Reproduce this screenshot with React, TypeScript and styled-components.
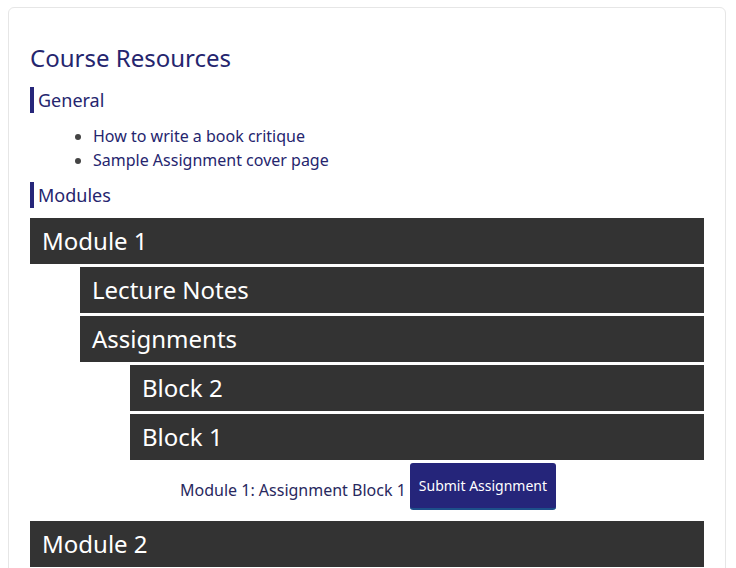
import React from "react";
import styled, { createGlobalStyle } from "styled-components";

const Global = createGlobalStyle`
  html, body { margin: 0; padding: 0; background: #ffffff; height: 568px; overflow: hidden; }
  body { padding: 7px 10px 0 8px; font-family: "Noto Sans", "Open Sans", sans-serif; }
  * { box-sizing: border-box; }
`;

const Card = styled.div`
  border: 1px solid #e6e6e6;
  border-radius: 6px;
  padding: 30px 21px 0 21px;
  background: #fff;
  height: 600px;
`;

const Title = styled.h2`
  margin: 0 0 9px 0;
  font-size: 24px;
  line-height: 40px;
  font-weight: 400;
  color: #25256e;
`;

const Section = styled.h3`
  margin: 0;
  padding-left: 4px;
  border-left: 4px solid #26267a;
  font-size: 18px;
  line-height: 26px;
  font-weight: 400;
  color: #25256e;
`;

const List = styled.ul`
  margin: 11px 0 10px 0;
  padding-left: 63px;
  list-style: disc;
`;

const Item = styled.li`
  font-size: 16px;
  line-height: 24px;
  color: #25256e;
  &::marker { color: #444; }
`;

const Tree = styled.div`
  margin-top: 10px;
  display: flex;
  flex-direction: column;
`;

const Bar = styled.div<{ $level: number }>`
  margin-left: ${(p) => p.$level * 50}px;
  margin-bottom: 3px;
  height: 46px;
  background: #333333;
  color: #ffffff;
  font-size: 24px;
  line-height: 46px;
  padding-left: 12px;
`;

const LeafRow = styled.div<{ $level: number }>`
  margin-left: ${(p) => p.$level * 50}px;
  display: flex;
  align-items: center;
  gap: 4px;
  padding: 0 0 11px 0;
`;

const LeafText = styled.span`
  font-size: 16px;
  color: #28285e;
  padding-top: 6px;
`;

const Button = styled.button`
  font-family: "Noto Sans", "Open Sans", sans-serif;
  font-size: 14px;
  color: #ffffff;
  background: #25257a;
  border: none;
  border-bottom: 2px solid #1d4f8a;
  border-radius: 3px;
  height: 47px;
  padding: 0 9px;
  cursor: pointer;
`;

export default function App() {
  return (
    <>
      <Global />
      <Card>
        <Title>Course Resources</Title>
        <Section>General</Section>
        <List>
          <Item>How to write a book critique</Item>
          <Item>Sample Assignment cover page</Item>
        </List>
        <Section>Modules</Section>
        <Tree>
          <Bar $level={0}>Module 1</Bar>
          <Bar $level={1}>Lecture Notes</Bar>
          <Bar $level={1}>Assignments</Bar>
          <Bar $level={2}>Block 2</Bar>
          <Bar $level={2}>Block 1</Bar>
          <LeafRow $level={3}>
            <LeafText>Module 1: Assignment Block 1</LeafText>
            <Button>Submit Assignment</Button>
          </LeafRow>
          <Bar $level={0}>Module 2</Bar>
        </Tree>
      </Card>
    </>
  );
}
